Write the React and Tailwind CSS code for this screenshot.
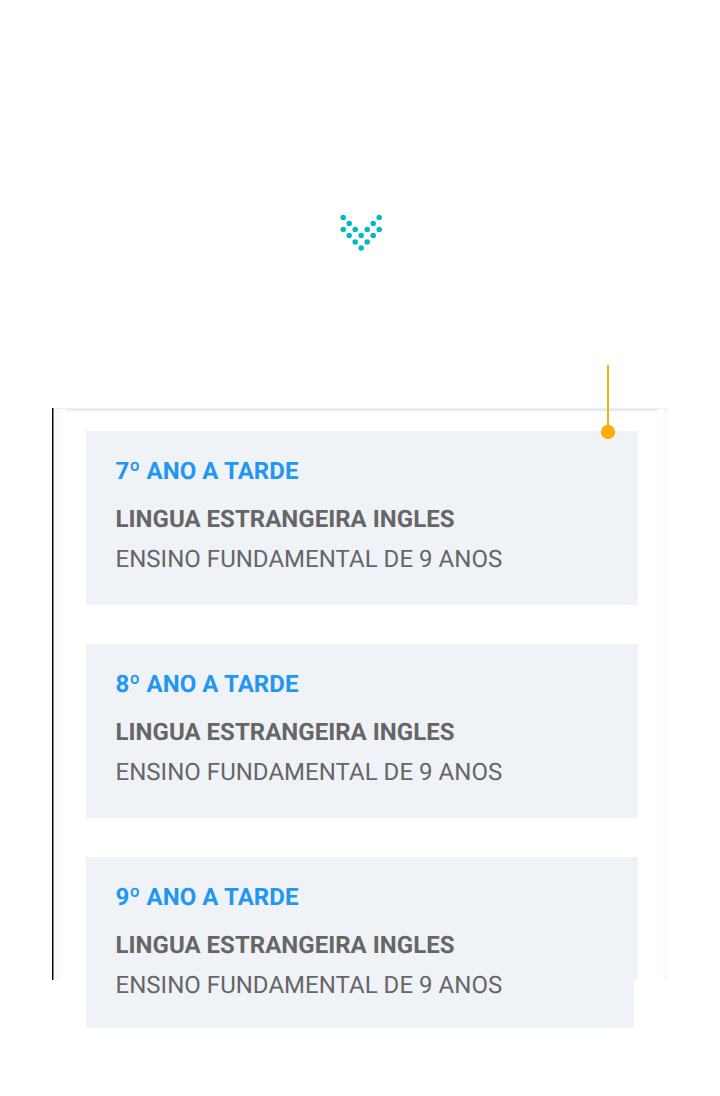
const classes = [
  { name: "7º ANO A TARDE", shape: "h-[173.6px] mb-[39.4px]" },
  { name: "8º ANO A TARDE", shape: "h-[173.6px] mb-[39.4px]" },
  {
    name: "9º ANO A TARDE",
    shape: "h-[171px] [clip-path:polygon(0_0,100%_0,100%_123px,548px_123px,548px_100%,0_100%)]",
  },
];

const dots = [
  [343.2, 217.4], [379.2, 217.4],
  [349.2, 223.5], [373.2, 223.5],
  [343.2, 229.5], [355.2, 229.5], [367.2, 229.5], [379.2, 229.5],
  [349.2, 235.6], [361.2, 235.6], [373.2, 235.6],
  [355.2, 242], [367.2, 242],
  [361.2, 248],
];

function DottedChevron() {
  return (
    <svg className="block h-[38px] w-[44px]" viewBox="339 213 44 38">
      {dots.map(([x, y]) => (
        <circle key={`${x}-${y}`} cx={x} cy={y} r="2.75" fill="#00b9c8" />
      ))}
    </svg>
  );
}

function ClassCard({ name, shape }) {
  return (
    <article className={`w-[552px] shrink-0 bg-[#eff3f8] pl-[29.5px] pt-[26px] text-2xl leading-7 text-[#666] ${shape}`}>
      <h2 className="font-bold tracking-[0.08px] text-[#2196f3]">{name}</h2>
      <p className="mt-5 font-bold tracking-[0.02px]">LINGUA ESTRANGEIRA INGLES</p>
      <p className="mt-3 tracking-[0.03px]">ENSINO FUNDAMENTAL DE 9 ANOS</p>
    </article>
  );
}

export default function App() {
  return (
    <main className="h-[1096px] w-[720px] overflow-hidden bg-white pt-[213px] font-['Roboto',sans-serif] [text-rendering:geometricPrecision]">
      <div className="ml-[339px]">
        <DottedChevron />
      </div>
      <section className="relative ml-[52px] mt-[157px] flex h-[572px] w-[616px]">
        <div className="w-px bg-black" />
        <div className="w-px bg-[#888]" />
        <div className="w-[7px] bg-[#fafafa]" />
        <div className="flex w-[602px] flex-col">
          <div className="h-px shrink-0 bg-[#e3ecf7]" />
          <div className="ml-[5px] h-0.5 w-[592px] shrink-0 bg-[#e3ecf7]" />
          <div className="ml-[25px] mt-5 flex flex-col">
            {classes.map((item) => (
              <ClassCard key={item.name} {...item} />
            ))}
          </div>
        </div>
        <div className="w-[5px] bg-[#fafafa]" />
        <div className="absolute left-0.5 top-0 h-px w-[614px] bg-[#e9eff8]" />
        <svg className="absolute left-[548px] top-[-43px] h-[75px] w-4" viewBox="0 0 16 75">
          <path d="M8 0V67" stroke="#f9b000" strokeWidth="2" />
          <circle cx="8" cy="67" r="7.2" fill="#f9b000" />
        </svg>
      </section>
    </main>
  );
}
